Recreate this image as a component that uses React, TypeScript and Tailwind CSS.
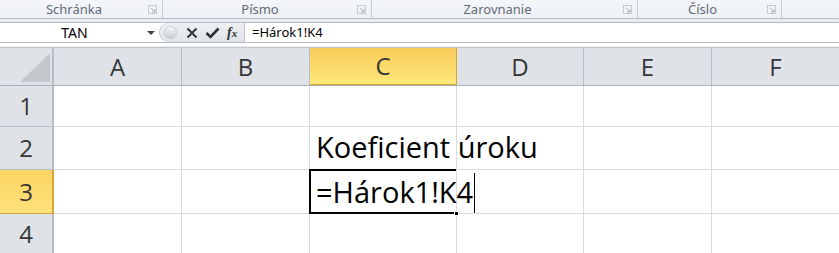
const cols = ["A", "B", "C", "D", "E", "F"];
const colWidths = [128, 128, 147, 127, 128, 128];
const rowHeights = [41, 43, 44, 40];

const cellFont = { fontFamily: '"Open Sans", "Noto Sans", sans-serif' };

function Launcher() {
  return (
    <svg width="9" height="9" viewBox="0 0 9 9" className="shrink-0">
      <rect x="0.5" y="0.5" width="8" height="8" fill="none" stroke="#c7ccd2" />
      <path d="M3 3 L7 7 M7 4 V7 H4" stroke="#aab0b7" fill="none" />
    </svg>
  );
}

function RibbonGroup({ label, width }: { label: string; width: number }) {
  return (
    <div
      className="flex items-center h-full border-r border-[#c5cbd2] pr-[5px]"
      style={{ width }}
    >
      <span className="flex-1 text-center text-[13px] text-[#626b7a] leading-none">{label}</span>
      <Launcher />
    </div>
  );
}

export default function App() {
  return (
    <div
      className="w-[839px] h-[253px] overflow-hidden bg-white select-none"
      style={{ fontFamily: '"Noto Sans", "Open Sans", sans-serif' }}
    >
      {/* ribbon group labels */}
      <div className="h-[19px] flex bg-gradient-to-b from-[#f4f6f9] to-[#eef1f5] border-b border-[#b9bec5]">
        <RibbonGroup label="Schránka" width={163} />
        <RibbonGroup label="Písmo" width={209} />
        <RibbonGroup label="Zarovnanie" width={266} />
        <RibbonGroup label="Číslo" width={144} />
        <div className="flex-1" />
      </div>

      {/* formula bar */}
      <div className="bg-[#e9ecf0] pt-[3px] pb-[1px] border-b border-[#c3c8ce]">
        <div className="h-[21px] flex bg-white border-y border-[#b7bcc3]">
          <div className="w-[159px] flex items-center bg-white">
            <span className="flex-1 text-center text-[14px] text-black pl-[2px]">TAN</span>
            <svg width="8" height="4" viewBox="0 0 8 4" className="mr-[4px]">
              <path d="M0 0 H8 L4 4 Z" fill="#444" />
            </svg>
          </div>
          <div className="w-[86px] flex items-center bg-gradient-to-b from-[#eef0f3] to-[#dfe3e8] rounded-l-[10px] border-l border-[#b9bec5] border-r border-[#c0c5cb]">
            <div className="w-[13px] h-[13px] ml-[4px] rounded-full bg-gradient-to-b from-[#f6f7f9] to-[#c9cdd3] border border-[#c8ccd2]" />
            <svg width="12" height="12" viewBox="0 0 12 12" className="ml-[9px]">
              <path d="M1.5 1.5 L10.5 10.5 M10.5 1.5 L1.5 10.5" stroke="#333" strokeWidth="2" />
            </svg>
            <svg width="15" height="12" viewBox="0 0 15 12" className="ml-[7px]">
              <path d="M1.5 6 L5.5 10 L13.5 1.5" stroke="#333" strokeWidth="2.6" fill="none" />
            </svg>
            <span
              className="ml-[7px] text-[14px] italic font-bold text-[#333] leading-none"
              style={{ fontFamily: '"Liberation Serif", serif' }}
            >
              f<span className="text-[11px]">x</span>
            </span>
          </div>
          <div className="flex-1 flex items-center pl-[7px] text-[13px] text-black">=Hárok1!K4</div>
        </div>
        <div className="h-[3px] bg-white" />
      </div>

      {/* grid */}
      <div className="flex flex-col">
        <div className="h-[38px] flex border-b border-[#a9b0b8]">
          <div className="w-[54px] shrink-0 bg-[#dfe3e8] border-r-2 border-[#b8bdc3] relative">
            <svg width="30" height="30" viewBox="0 0 30 30" className="absolute left-[20px] top-[5px]">
              <path d="M30 0 V29 H0 Z" fill="#c3c7cc" />
            </svg>
          </div>
          {cols.map((c, i) =>
            c === "C" ? (
              <div
                key={c}
                className="shrink-0 flex items-center justify-center bg-gradient-to-b from-[#f9cb5a] to-[#fde97a] border-r border-b border-[#d7a33a] text-[24px] text-[#363636]"
                style={{ width: colWidths[i], ...cellFont }}
              >
                {c}
              </div>
            ) : (
              <div
                key={c}
                className="shrink-0 flex items-center justify-center bg-[#dfe3e8] border-r border-[#b8bdc3] text-[24px] text-[#363636]"
                style={{ width: colWidths[i], ...cellFont }}
              >
                {c}
              </div>
            )
          )}
        </div>

        {rowHeights.map((h, r) => (
          <div key={r} className="flex" style={{ height: h }}>
            <div
              className={
                r === 2
                  ? "w-[54px] shrink-0 flex items-center justify-center bg-gradient-to-b from-[#fbd462] to-[#fde27a] border-r-2 border-b border-[#d7a33a] text-[24px] text-[#363636]"
                  : "w-[54px] shrink-0 flex items-center justify-center bg-[#dfe3e8] border-r-2 border-b border-[#b8bdc3] text-[24px] text-[#363636]"
              }
              style={cellFont}
            >
              {r + 1}
            </div>
            {cols.map((c, i) => (
              <div
                key={c}
                className="shrink-0 border-r border-b border-[#d9dbde] relative"
                style={{ width: colWidths[i] }}
              >
                {r === 1 && c === "C" && (
                  <span
                    className="absolute left-[6px] bottom-[8px] whitespace-nowrap text-[29px] leading-none text-black z-10"
                    style={cellFont}
                  >
                    Koeficient úroku
                  </span>
                )}
                {r === 2 && c === "C" && (
                  <>
                    <div className="absolute -left-[1px] -top-[1px] right-0 -bottom-[1px] border-l-2 border-t-2 border-b-2 border-black z-20" />
                    <span
                      className="absolute left-[6px] bottom-[7px] whitespace-nowrap text-[29px] leading-none text-black z-30"
                      style={cellFont}
                    >
                      =Hárok1!K4
                    </span>
                    <div className="absolute left-[164px] top-[3px] bottom-0 w-px bg-black z-30" />
                    <div className="absolute -right-[3px] -bottom-[3px] w-[5px] h-[5px] bg-black z-30 border border-white" />
                  </>
                )}
              </div>
            ))}
          </div>
        ))}
      </div>
    </div>
  );
}
